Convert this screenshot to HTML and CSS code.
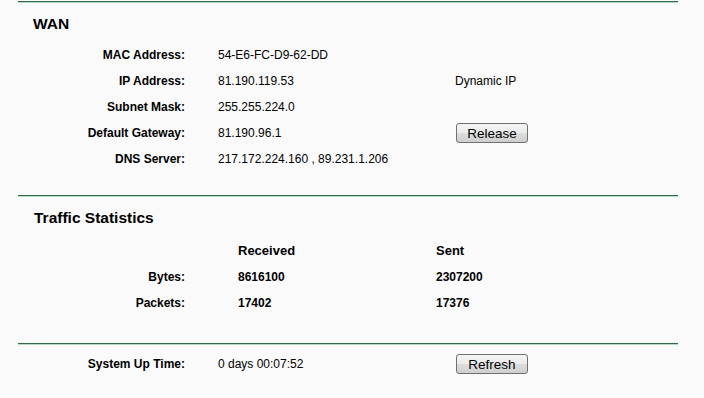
FILE: index.html
```html
<!DOCTYPE html>
<html lang="en">
<head>
  <meta charset="UTF-8">
  <title>Status</title>
  <link rel="stylesheet" href="styles.css">
</head>
<body>
  <div class="panel">

    <div class="section wan">
      <h3>WAN</h3>
      <div class="grid info">
        <div class="label">MAC Address:</div>
        <div class="value">54-E6-FC-D9-62-DD</div>
        <div class="extra"></div>

        <div class="label">IP Address:</div>
        <div class="value">81.190.119.53</div>
        <div class="extra">Dynamic IP</div>

        <div class="label">Subnet Mask:</div>
        <div class="value">255.255.224.0</div>
        <div class="extra"></div>

        <div class="label">Default Gateway:</div>
        <div class="value">81.190.96.1</div>
        <div class="extra"><button>Release</button></div>

        <div class="label">DNS Server:</div>
        <div class="value">217.172.224.160 , 89.231.1.206</div>
        <div class="extra"></div>
      </div>
    </div>

    <div class="section traffic">
      <h3>Traffic Statistics</h3>
      <div class="grid stats">
        <div class="label"></div>
        <div class="head">Received</div>
        <div class="head">Sent</div>

        <div class="label">Bytes:</div>
        <div class="num">8616100</div>
        <div class="num">2307200</div>

        <div class="label">Packets:</div>
        <div class="num">17402</div>
        <div class="num">17376</div>
      </div>
    </div>

    <div class="section uptime">
      <div class="grid info">
        <div class="label">System Up Time:</div>
        <div class="value">0 days 00:07:52</div>
        <div class="extra"><button>Refresh</button></div>
      </div>
    </div>

  </div>
</body>
</html>
```

FILE: styles.css
```css
body {
  margin: 0;
  padding-top: 1px;
  background-color: #fafafa;
  font-family: "Liberation Sans", Arial, sans-serif;
  font-size: 12px;
  color: #000;
}
.panel {
  width: 660px;
  margin-left: 18px;
}
.section {
  border-top: 1px solid #2f6a4c;
  box-shadow: inset 0 1px 0 #b8d8c4;
}
h3 {
  margin: 0 0 0 15px;
  font-size: 15.5px;
  line-height: 18px;
  font-weight: bold;
}
.wan {
  padding: 13px 0 23px;
}
.wan h3 {
  margin-bottom: 9px;
}
.traffic {
  padding: 13px 0 27px;
}
.traffic h3 {
  margin-bottom: 10px;
  margin-left: 16px;
}
.uptime {
  padding: 7px 0 0;
}
.grid {
  display: grid;
  grid-auto-rows: 26px;
  align-items: center;
}
.info {
  grid-template-columns: 167px 237px 1fr;
}
.info .value {
  padding-left: 33px;
}
.stats {
  grid-template-columns: 167px 251px 1fr;
  grid-template-rows: 27px;
}
.stats .head,
.stats .num {
  padding-left: 53px;
  font-weight: bold;
}
.stats .head {
  font-size: 13px;
}
.stats .num + .num,
.stats .head + .head {
  padding-left: 0;
}
.label {
  text-align: right;
  font-weight: bold;
}
.extra {
  padding-left: 33px;
}
button {
  margin-left: 1px;
  width: 72px;
  height: 20px;
  padding: 0;
  border: 1px solid #707070;
  border-radius: 3px;
  background: linear-gradient(#f4f4f4 0%, #ebebeb 50%, #dddddd 51%, #cfcfcf 100%);
  font-family: "Liberation Sans", Arial, sans-serif;
  font-size: 13.5px;
  color: #000;
  cursor: pointer;
}
```
